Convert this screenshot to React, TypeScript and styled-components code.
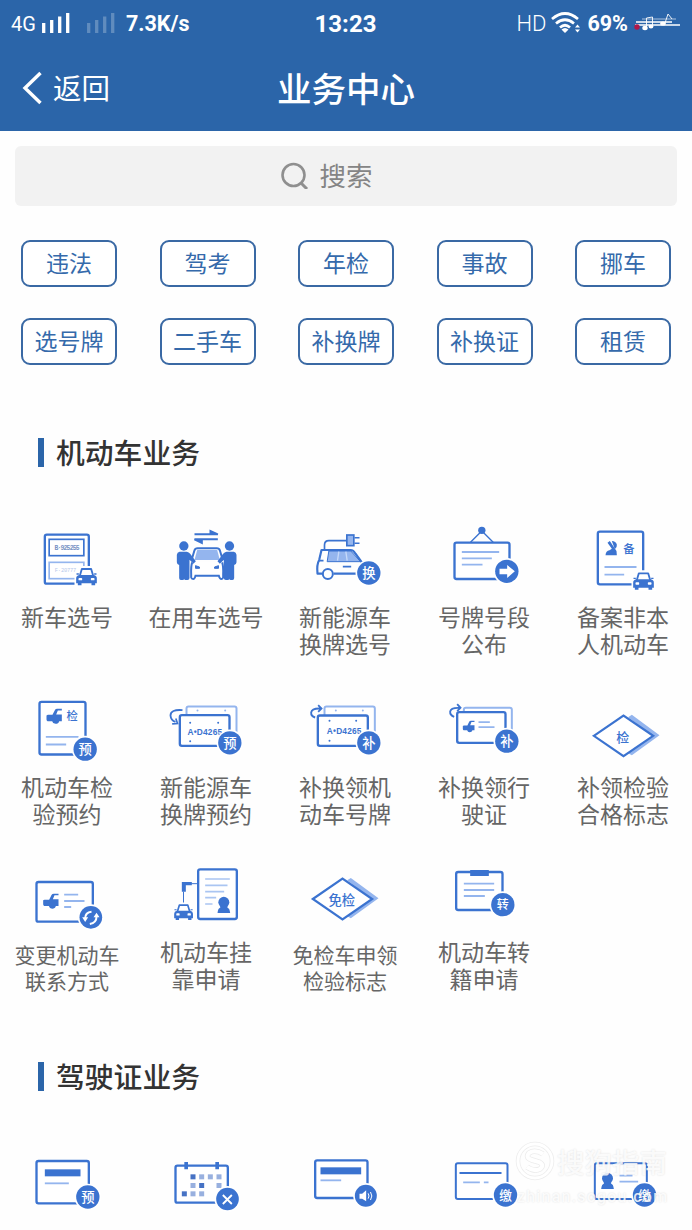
import React from "react";
import styled, { createGlobalStyle } from "styled-components";

const INK = "#3b73d0";
const SOFT = "#94b5ee";
const BRAND = "#2b65a9";
const CJK = `"Noto Sans CJK SC", sans-serif`;

const GlobalStyle = createGlobalStyle`
  * { box-sizing: border-box; }
  body { margin: 0; background: #fefefe; font-family: Roboto, ${CJK}; }
`;

const Screen = styled.div`
  position: relative;
  width: 692px;
  height: 1230px;
  overflow: hidden;
  background: #fefefe;
`;

const Header = styled.header`
  height: 131px;
  background: ${BRAND};
  color: #fff;
`;

const StatusBar = styled.div`
  display: grid;
  grid-template-columns: 1fr auto 1fr;
  align-items: center;
  height: 48px;
  padding: 0 12px 0 11px;
`;

const StatusGroup = styled.div<{ $end?: boolean }>`
  display: flex;
  align-items: center;
  justify-content: ${(p) => (p.$end ? "flex-end" : "flex-start")};
`;

const StatusText = styled.span<{ $size: number; $weight: number; $gap?: number }>`
  font-family: Roboto, sans-serif;
  font-size: ${(p) => p.$size}px;
  font-weight: ${(p) => p.$weight};
  line-height: 28px;
  margin-left: ${(p) => p.$gap ?? 0}px;
  white-space: nowrap;
`;

const StatusGlyph = styled.svg<{ $gap: number }>`
  flex: none;
  margin-left: ${(p) => p.$gap}px;
  margin-bottom: 2px;
`;

const NavBar = styled.div`
  display: grid;
  grid-template-columns: 1fr auto 1fr;
  align-items: center;
  height: 78px;
  padding: 0 22px;
`;

const BackButton = styled.button`
  display: flex;
  align-items: center;
  gap: 10px;
  padding: 0;
  border: 0;
  background: none;
  color: #fff;
  font: 400 28.5px/38px ${CJK};
`;

const Title = styled.h1`
  margin: 0;
  font: 500 34.5px/48px ${CJK};
`;

const SearchBox = styled.div`
  display: flex;
  align-items: center;
  justify-content: center;
  gap: 11px;
  height: 60px;
  margin: 15px 15px 0;
  padding: 0 39px 2px 0;
  border-radius: 6px;
  background: #f2f2f2;
  color: #858585;
  font: 400 26.5px/40px ${CJK};
`;

const Chips = styled.div`
  display: grid;
  grid-template-columns: repeat(5, 96px);
  justify-content: space-between;
  row-gap: 31px;
  margin: 34px 21px 0;
`;

const Chip = styled.button`
  height: 47px;
  padding: 0 0 3px;
  border: 2px solid #3a69a4;
  border-radius: 9px;
  background: #fff;
  color: #356aab;
  font: 400 23px/40px ${CJK};
`;

const SectionTitle = styled.h2<{ $top: number }>`
  display: flex;
  align-items: center;
  gap: 12px;
  height: 38px;
  margin: ${(p) => p.$top}px 0 0 38px;
  color: #333;
  font: 500 28.8px/38px ${CJK};

  &::before {
    content: "";
    width: 6px;
    height: 29px;
    background: ${BRAND};
  }
`;

const ServiceRow = styled.div<{ $top: number }>`
  display: grid;
  grid-template-columns: repeat(5, 139px);
  height: 137px;
  margin: ${(p) => p.$top}px 0 0 -3px;
`;

const Service = styled.div`
  display: flex;
  flex-direction: column;
  align-items: center;
`;

const ServiceIcon = styled.svg`
  flex: none;
  width: 139px;
  height: 82px;
`;

const ServiceLabel = styled.span<{ $compact?: boolean }>`
  padding: ${(p) => (p.$compact ? 4 : 0)}px 0 0 1px;
  margin-top: -1px;
  color: #666;
  text-align: center;
  white-space: pre-line;
  font: 400 ${(p) => (p.$compact ? "21px/25.5px" : "23px/27px")} ${CJK};
`;

const Watermark = styled.div`
  position: absolute;
  left: 515px;
  top: 1139px;
  width: 170px;
  color: rgba(255, 255, 255, 0.85);
  text-shadow: 0 0 2px rgba(0, 0, 0, 0.13);
`;

const WatermarkName = styled.div`
  display: flex;
  align-items: center;
  gap: 2px;
  height: 44px;
  font: 500 27.5px/40px ${CJK};
`;

const WatermarkUrl = styled.div`
  margin: 3px 0 0 2px;
  font: 500 16px/22px Roboto, sans-serif;
  letter-spacing: 1.2px;
`;

/* ---------- drawing parts, in units of a third of a pixel ---------- */

const Dot = ({ x, y, r = 35, children }: { x: number; y: number; r?: number; children?: React.ReactNode }) => (
  <g>
    <circle cx={x} cy={y} r={r + 5} fill="#fff" />
    <circle cx={x} cy={y} r={r} fill={INK} />
    {children}
  </g>
);

const Word = ({ x, y, size, fill = INK, weight = 500, children }: { x: number; y: number; size: number; fill?: string; weight?: number; children: string }) => (
  <text x={x} y={y} fontSize={size} fill={fill} fontWeight={weight} textAnchor="middle" fontFamily={CJK}>
    {children}
  </text>
);

const Badge = ({ x, y, text, size = 40 }: { x: number; y: number; text: string; size?: number }) => (
  <Dot x={x} y={y}>
    <Word x={x} y={y + size * 0.37} size={size} fill="#fff">{text}</Word>
  </Dot>
);

const Card = ({ x, y, w, h, color = INK, sw = 7, fill = "#fff" }: { x: number; y: number; w: number; h: number; color?: string; sw?: number; fill?: string }) => (
  <rect x={x} y={y} width={w} height={h} rx={6} fill={fill} stroke={color} strokeWidth={sw} />
);

const Lines = ({ d, color = SOFT, sw = 5.5 }: { d: string; color?: string; sw?: number }) => (
  <path d={d} fill="none" stroke={color} strokeWidth={sw} />
);

const CarFront = ({ x, y, s = 1 }: { x: number; y: number; s?: number }) => (
  <g transform={`translate(${x} ${y}) scale(${s})`}>
    <path d="M-5 16H4L8-4H54L59 16H67V58H-5Z" fill="#fff" />
    <path d="M11 25L17 5H45L51 25" fill="#fff" stroke={INK} strokeWidth={5.5} strokeLinejoin="round" />
    <path d="M1 18H8V22H1ZM54 18H61V22H54Z" fill={INK} />
    <path d="M9 23H53Q62 25 62 33V48H57V54H46V48H16V54H5V48H0V33Q0 25 9 23Z" fill={INK} />
    <rect x={7} y={32} width={11} height={7} rx={2} fill="#fff" />
    <rect x={44} y={32} width={11} height={7} rx={2} fill="#fff" />
  </g>
);

const CarSide = ({ x, y, s = 1 }: { x: number; y: number; s?: number }) => (
  <g transform={`translate(${x} ${y}) scale(${s})`} fill={INK}>
    <path d="M0 20L4 18H18L25 4Q27 0 32 0H46V5H34L29 17H46V37H38Q36 45 27 45Q19 45 17 37H3Q0 36 0 32Z" />
  </g>
);

const Person = () => (
  <>
    <circle cx={553} cy={109} r={14} />
    <path d="M540 126H562Q568 127 572 132L589 155L582 162L570 150V205Q570 211 564 211H558Q554 211 554 207Q554 211 549 211H544Q539 211 539 205V166Q532 165 532 158V135Q533 127 540 126Z" />
  </>
);

const PlateDots = ({ d, color = INK }: { d: string; color?: string }) => (
  <path d={d} stroke={color} strokeWidth={6} strokeLinecap="round" />
);

const PlateCode = ({ x, y }: { x: number; y: number }) => (
  <text x={x} y={y} fontSize={25} fontWeight={700} fill={INK} textLength={104} fontFamily="Liberation Sans, sans-serif">
    A•D4265
  </text>
);

const Diamond = ({ x, y }: { x: number; y: number }) => (
  <g transform={`translate(${x} ${y})`} strokeLinejoin="miter">
    <path d="M25-63L108-2L25 58L14 52L86-2L14-56Z" fill={SOFT} />
    <path d="M-89 0L0-61L89 0L0 61Z" fill="#fff" stroke={INK} strokeWidth={6.5} />
  </g>
);

const Bust = ({ x, y }: { x: number; y: number }) => (
  <g transform={`translate(${x} ${y})`} fill={INK}>
    <circle cx={0} cy={16} r={16.5} />
    <path d="M-9 26H9Q9 32 16 36Q18 40 19 48H-19Q-18 40-16 36Q-9 32-9 26Z" />
  </g>
);

/* ---------- service icons ---------- */

type Item = { label?: string; compact?: boolean; view: [number, number]; art: React.ReactNode };

const vehicleRow1: Item[] = [
  {
    label: "新车选号",
    view: [-7.5, 37],
    art: (
      <>
        <Card x={136} y={75} w={132} h={147} />
        <rect x={149} y={89} width={104} height={49} fill="none" stroke={INK} strokeWidth={5} />
        <rect x={149} y={158} width={104} height={49} fill="none" stroke={SOFT} strokeWidth={5} />
        <text x={165} y={121} fontSize={19} fontWeight={700} fill="#7793c4" textLength={75} fontFamily="Liberation Mono, monospace">B·925255</text>
        <text x={166} y={188} fontSize={16} fill="#b7c9ea" textLength={64} fontFamily="Liberation Mono, monospace">F·20777</text>
        <CarFront x={230} y={173} />
      </>
    ),
  },
  {
    label: "在用车选号",
    view: [409.5, 37],
    art: (
      <>
        <path d="M585 74H655L633 64V74M655 89H585L607 100V89" fill={INK} stroke={INK} strokeWidth={6} />
        <path d="M576 152L585 122Q587 116 594 116H652Q659 116 661 122L670 152" fill="none" stroke={INK} strokeWidth={6} />
        <path d="M593 121H653L661 151H585Z" fill={SOFT} />
        <path d="M578 158Q574 170 575 193V203Q576 208 581 208Q586 208 588 198H658Q660 208 666 208Q670 208 671 203V193Q672 170 668 158" fill="#fff" stroke={INK} strokeWidth={6} />
        <path d="M588 168L600 172V176H588ZM657 168L645 172V176H657Z" fill={INK} stroke={INK} strokeWidth={3} />
        <g fill={INK}>
          <Person />
          <g transform="matrix(-1 0 0 1 1243 0)"><Person /></g>
        </g>
      </>
    ),
  },
  {
    label: "新能源车\n换牌选号",
    view: [-13.5, 37],
    art: (
      <>
        <path d="M135 119V106Q135 93 148 93H200" fill="none" stroke={INK} strokeWidth={5} />
        <rect x={202} y={76} width={21} height={32} fill={SOFT} stroke={INK} strokeWidth={5} />
        <path d="M225 84H240M225 101H240" stroke={INK} strokeWidth={4.5} />
        <path d="M128 192H114Q111 165 119 151L126 121H213Q222 121 228 132L246 157Q257 161 263 171M162 192H250" fill="none" stroke={INK} strokeWidth={6.5} strokeLinejoin="round" />
        <path d="M148 124H214L243 156H143Z" fill={SOFT} stroke={INK} strokeWidth={3} />
        <path d="M178 126L174 153M199 126L203 153" stroke="#c5d9fa" strokeWidth={4} />
        <path d="M118 153H132M190 171H215" stroke={INK} strokeWidth={5} />
        <circle cx={145} cy={193} r={15} fill="#fff" stroke={INK} strokeWidth={6} />
        <Badge x={268} y={190} text="换" />
      </>
    ),
  },
  {
    label: "号牌号段\n公布",
    view: [403.5, 37],
    art: (
      <>
        <circle cx={607} cy={62} r={11} fill={INK} />
        <path d="M603 68L573 98M611 68L641 98" stroke={INK} strokeWidth={4} />
        <Card x={525} y={99} w={165} h={109} />
        <Lines d="M547 127H659M547 146H637M547 165H609" />
        <Dot x={682} y={185} />
        <path d="M660 177H683V166L706 185L683 205V194H660Z" fill="#fff" />
      </>
    ),
  },
  {
    label: "备案非本\n人机动车",
    view: [820.5, 37],
    art: (
      <>
        <Card x={955} y={66} w={136} h={158} />
        <path d="M984 99L991 94L1011 124L1012 137H978Q979 124 990 122L997 117Z" fill={INK} />
        <path d="M997 94Q1009 94 1012 105Q1013 114 1006 119Z" fill={INK} />
        <Word x={1048} y={129} size={34}>备</Word>
        <Lines d="M975 172H1071M975 195H1034" />
        <CarFront x={1061} y={186} />
      </>
    ),
  },
];

const vehicleRow2: Item[] = [
  {
    label: "机动车检\n验预约",
    view: [-7.5, 36.5],
    art: (
      <>
        <Card x={120} y={66} w={138} h={158} />
        <CarSide x={141} y={87} />
        <Word x={218} y={121} size={34}>检</Word>
        <Lines d="M139 171H237M139 194H200" />
        <Badge x={257} y={208} text="预" />
      </>
    ),
  },
  {
    label: "新能源车\n换牌预约",
    view: [409.5, 36.5],
    art: (
      <>
        <Card x={561} y={80} w={150} h={80} color={SOFT} sw={6} />
        <PlateDots d="M594 92V92.1M677 92V92.1" color={SOFT} />
        <Card x={541} y={106} w={149} h={92} />
        <path d="M549 91Q513 88 513 107Q514 122 528 126" fill="none" stroke={INK} strokeWidth={5.5} />
        <path d="M529 116L534 131L518 132" fill="none" stroke={INK} strokeWidth={5} />
        <PlateDots d="M572 129V129.1M656 129V129.1M572 184V184.1" />
        <PlateCode x={564} y={165} />
        <Badge x={691} y={189} text="预" />
      </>
    ),
  },
  {
    label: "补换领机\n动车号牌",
    view: [-13.5, 36.5],
    art: (
      <>
        <Card x={135} y={80} w={151} h={80} color={SOFT} sw={6} />
        <PlateDots d="M169 92V92.1M250 92V92.1" color={SOFT} />
        <Card x={115} y={107} w={150} h={91} />
        <path d="M107 113Q94 109 95 98Q97 85 122 86M116 76L126 86L116 96" fill="none" stroke={INK} strokeWidth={5.5} />
        <PlateDots d="M150 123V123.1M230 123V123.1M150 183V183.1" />
        <PlateCode x={142} y={162} />
        <Badge x={268} y={189} text="补" />
      </>
    ),
  },
  {
    label: "补换领行\n驶证",
    view: [403.5, 36.5],
    art: (
      <>
        <Card x={553} y={84} w={144} h={80} color={SOFT} sw={6} />
        <Card x={533} y={97} w={145} h={92} />
        <path d="M524 111Q511 106 512 95Q514 83 539 84M533 73L543 84L533 94" fill="none" stroke={INK} strokeWidth={5.5} />
        <CarSide x={550} y={123} s={0.76} />
        <Lines d="M597 127H631M597 142H645" />
        <Badge x={682} y={184} text="补" />
      </>
    ),
  },
  {
    label: "补领检验\n合格标志",
    view: [820.5, 36.5],
    art: (
      <>
        <Diamond x={1032} y={168} />
        <Word x={1030} y={187} size={39}>检</Word>
      </>
    ),
  },
];

const vehicleRow3: Item[] = [
  {
    label: "变更机动车\n联系方式",
    compact: true,
    view: [-7.5, 21],
    art: (
      <>
        <Card x={111} y={96} w={169} h={119} />
        <CarSide x={131} y={131} />
        <Lines d="M194 134H236M194 153H255M194 171H215" />
        <Dot x={274} y={202} r={34} />
        <path d="M257 205Q257 187 276 185M291 200Q291 218 271 222" fill="none" stroke="#fff" strokeWidth={6} />
        <path d="M248 202H266L257 216ZM282 202H300L291 188Z" fill="#fff" />
      </>
    ),
  },
  {
    label: "机动车挂\n靠申请",
    view: [409.5, 21],
    art: (
      <>
        <path d="M593 101H575M552 163V125" stroke={INK} strokeWidth={3} />
        <path d="M547 96H577V106H559V125H547Z" fill={INK} />
        <Card x={596} y={58} w={116} h={149} />
        <Lines d="M617 87H691M617 106H684M617 125H674M617 143H650M617 162H639" color="#aac5f2" sw={5} />
        <Bust x={673} y={141} />
        <CarFront x={524} y={161} s={0.91} />
      </>
    ),
  },
  {
    label: "免检车申领\n检验标志",
    compact: true,
    view: [-13.5, 21],
    art: (
      <>
        <Diamond x={189} y={147} />
        <Word x={187} y={164} size={40}>免检</Word>
      </>
    ),
  },
  {
    label: "机动车转\n籍申请",
    view: [403.5, 21],
    art: (
      <>
        <Card x={530} y={66} w={139} h={114} />
        <rect x={572} y={60} width={56} height={18} fill={INK} />
        <Lines d="M553 101H644M553 120H644M553 138H616" />
        <Badge x={670} y={164} text="转" size={36} />
      </>
    ),
  },
];

const daySquares: [number, number, boolean][] = [
  [573, 105, true], [599, 105, false], [625, 105, false], [651, 105, false],
  [573, 131, false], [599, 131, true], [651, 131, false],
  [547, 156, true], [573, 156, false], [599, 156, false],
];

const licenceRow: Item[] = [
  {
    view: [-7.5, 17],
    art: (
      <>
        <Card x={111} y={65} w={157} h={127} />
        <rect x={136} y={90} width={107} height={21} fill={INK} />
        <Lines d="M136 132H208" />
        <Badge x={265} y={173} text="预" />
      </>
    ),
  },
  {
    view: [409.5, 17],
    art: (
      <>
        <Card x={528} y={79} w={157} h={111} />
        <path d="M560 68V90M653 68V90" stroke={INK} strokeWidth={11} />
        {daySquares.map(([x, y, strong]) => (
          <rect key={`${x}-${y}`} x={x} y={y} width={15} height={15} fill={strong ? "#4672c4" : "#98b0df"} />
        ))}
        <Dot x={684} y={179} r={34} />
        <path d="M670 167L697 194M697 167L670 194" stroke="#fff" strokeWidth={5.5} />
      </>
    ),
  },
  {
    view: [826.5, 17],
    art: (
      <>
        <Card x={947} y={63} w={157} h={113} />
        <rect x={963} y={84} width={122} height={21} fill={INK} />
        <Lines d="M963 123H1025" />
        <Dot x={1099} y={169} r={33} />
        <path d="M1080 163H1088L1100 153V186L1088 178H1080Z" fill="#fff" />
        <path d="M1106 162Q1111 170 1106 178M1113 158Q1121 170 1113 182" fill="none" stroke="#fff" strokeWidth={3} />
      </>
    ),
  },
  {
    view: [-46.5, 47],
    art: (
      <>
        <Card x={79} y={102} w={155} h={107} sw={6} />
        <Lines d="M90 131H216" color={INK} />
        <Lines d="M101 159H151M163 159H177" />
        <Badge x={228} y={197} text="缴" size={38} />
      </>
    ),
  },
  {
    view: [370.5, 47],
    art: (
      <>
        <Card x={496} y={102} w={156} h={107} sw={6} />
        <Bust x={534} y={131} />
        <Lines d="M570 139H609M570 157H626" />
        <Badge x={645} y={197} text="缴" size={38} />
      </>
    ),
  },
];

const Services = ({ items, top }: { items: Item[]; top: number }) => (
  <ServiceRow $top={top}>
    {items.map((item, i) => (
      <Service key={i}>
        <ServiceIcon viewBox={`${item.view[0]} ${item.view[1]} 417 246`}>{item.art}</ServiceIcon>
        {item.label && <ServiceLabel $compact={item.compact}>{item.label}</ServiceLabel>}
      </Service>
    ))}
  </ServiceRow>
);

const Signal = ({ gap, faint }: { gap: number; faint?: boolean }) => (
  <StatusGlyph $gap={gap} width={28} height={20} viewBox="0 0 28 20" opacity={faint ? 0.25 : 1}>
    <path d="M1.7 20V10M9.7 20V7M17.7 20V3.5M25.7 20V0" stroke="#fff" strokeWidth={3.3} />
  </StatusGlyph>
);

const chips = ["违法", "驾考", "年检", "事故", "挪车", "选号牌", "二手车", "补换牌", "补换证", "租赁"];

export default function App() {
  return (
    <Screen>
      <GlobalStyle />
      <Header>
        <StatusBar>
          <StatusGroup>
            <StatusText $size={20} $weight={400}>4G</StatusText>
            <Signal gap={6} />
            <Signal gap={17} faint />
            <StatusText $size={21.5} $weight={700} $gap={11}>7.3K/s</StatusText>
          </StatusGroup>
          <StatusText $size={24} $weight={700}>13:23</StatusText>
          <StatusGroup $end>
            <StatusText $size={22} $weight={300}>HD</StatusText>
            <StatusGlyph $gap={5} width={30} height={22} viewBox="0 0 30 22">
              <g fill="none" stroke="#fff" strokeWidth={2.7}>
                <path d="M1 7Q14-4 27 7M5 11.5Q14 4 23 11.5M9 15.5Q14 11 19 15.5" />
              </g>
              <path d="M14 21L10.5 17.5Q14 14.5 17.5 17.5ZM24 15.5L26.5 12.5L29 15.5ZM24 17.5L26.5 20.5L29 17.5Z" fill="#fff" />
            </StatusGlyph>
            <StatusText $size={21.5} $weight={700} $gap={6}>69%</StatusText>
            <StatusGlyph $gap={6} width={46} height={20} viewBox="0 0 46 20">
              <path d="M2 9H38M1 12H46" stroke="#fff" strokeWidth={1.3} />
              <path d="M8 6H42" stroke="#fff" strokeWidth={1} opacity={0.6} />
              <path d="M12.5 15V5L18.5 4V13.5M31 10L34 1L38 6" fill="none" stroke="#fff" strokeWidth={0.9} />
              <ellipse cx={11} cy={15} rx={2.7} ry={2.2} fill="#fff" />
              <ellipse cx={17} cy={13.5} rx={2.4} ry={2} fill="#fff" />
              <ellipse cx={29} cy={10.5} rx={2.8} ry={2} fill="#fff" />
              <circle cx={3} cy={14} r={2.7} fill="#b01748" />
            </StatusGlyph>
          </StatusGroup>
        </StatusBar>
        <NavBar>
          <BackButton>
            <svg width={21} height={36} viewBox="0 0 21 36">
              <path d="M18.5 4L3 19L18.5 34" fill="none" stroke="#fff" strokeWidth={3.4} />
            </svg>
            返回
          </BackButton>
          <Title>业务中心</Title>
        </NavBar>
      </Header>

      <SearchBox>
        <svg width={28} height={28} viewBox="0 0 28 28">
          <circle cx={12.5} cy={14} r={11} fill="none" stroke="#8f8f8f" strokeWidth={2.6} />
          <path d="M20 22L26 28" stroke="#8f8f8f" strokeWidth={3} />
        </svg>
        搜索
      </SearchBox>

      <Chips>
        {chips.map((chip) => (
          <Chip key={chip}>{chip}</Chip>
        ))}
      </Chips>

      <SectionTitle $top={68}>机动车业务</SectionTitle>
      <Services items={vehicleRow1} top={51} />
      <Services items={vehicleRow2} top={33} />
      <Services items={vehicleRow3} top={28} />

      <SectionTitle $top={63}>驾驶证业务</SectionTitle>
      <Services items={licenceRow} top={50} />

      <Watermark>
        <WatermarkName>
          <svg width={40} height={40} viewBox="0 0 40 40">
            <circle cx={20} cy={20} r={17} fill="none" stroke="#ececec" strokeWidth={4.5} />
            <circle cx={20} cy={20} r={17} fill="none" stroke="#fff" strokeWidth={3} />
            <path d="M28 13Q20 8 14 12Q10 17 17 19L24 21Q30 24 25 28Q19 31 12 26" fill="none" stroke="#ececec" strokeWidth={5.5} />
            <path d="M28 13Q20 8 14 12Q10 17 17 19L24 21Q30 24 25 28Q19 31 12 26" fill="none" stroke="#fff" strokeWidth={4} />
          </svg>
          搜狗指南
        </WatermarkName>
        <WatermarkUrl>zhinan.sogou.com</WatermarkUrl>
      </Watermark>
    </Screen>
  );
}
